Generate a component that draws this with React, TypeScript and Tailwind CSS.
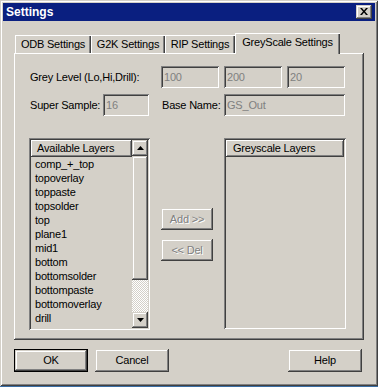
import React from 'react';

const raised = 'shadow-[inset_-1px_-1px_#404040,inset_1px_1px_#ffffff,inset_-2px_-2px_#808080]';
const raisedBtn = 'shadow-[inset_-1px_-1px_#404040,inset_1px_1px_#d4d0c8,inset_-2px_-2px_#808080,inset_2px_2px_#ffffff]';
const sunken = 'shadow-[inset_1px_1px_#808080,inset_-1px_-1px_#ffffff,inset_2px_2px_#404040,inset_-2px_-2px_#d4d0c8]';

const layers = [
  'comp_+_top',
  'topoverlay',
  'toppaste',
  'topsolder',
  'top',
  'plane1',
  'mid1',
  'bottom',
  'bottomsolder',
  'bottompaste',
  'bottomoverlay',
  'drill',
  'board',
];

const Field: React.FC<{ value: string; width: string }> = ({ value, width }) => (
  <div className={`${width} h-[22px] bg-[#d4d0c8] ${sunken} flex items-center pl-[3px] text-[#808080]`}>{value}</div>
);

const Arrow: React.FC<{ up?: boolean }> = ({ up }) => (
  <svg width="7" height="4" viewBox="0 0 7 4">
    {up ? <polygon points="3.5,0 7,4 0,4" fill="#000" /> : <polygon points="0,0 7,0 3.5,4" fill="#000" />}
  </svg>
);

const Tab: React.FC<{ label: string; width: string; active?: boolean }> = ({ label, width, active }) => (
  <div
    className={`${width} ${active ? 'h-[21px] -mb-[1px] relative z-10 pb-[3px]' : 'h-[18px]'} bg-[#d4d0c8] shadow-[inset_1px_1px_#ffffff,inset_-1px_0_#404040,inset_-2px_0_#808080] flex items-center justify-center`}
  >
    {label}
  </div>
);

export default function App() {
  return (
    <div className="w-[378px] h-[387px] bg-[#3a6ea5] font-['Liberation_Sans',Arial,sans-serif] text-[11px] tracking-[-0.2px] text-black leading-none">
      <div className="w-[378px] h-[386px] bg-[#d4d0c8] p-[3px] flex flex-col shadow-[inset_1px_1px_#d4d0c8,inset_-1px_-1px_#404040,inset_2px_2px_#ffffff,inset_-2px_-2px_#808080]">
        {/* title bar */}
        <div className="h-[18px] bg-[#0a1f80] flex items-center justify-between pl-[3px] pr-[3px]">
          <span className="text-white font-bold text-[12px] tracking-normal">Settings</span>
          <div className={`w-[16px] h-[14px] bg-[#d4d0c8] ${raisedBtn} flex items-center justify-center pb-[1px] pr-[1px]`}>
            <svg width="8" height="7" viewBox="0 0 8 7">
              <path d="M0 0h2l2 2.5L6 0h2L5 3.5 8 7H6L4 4.5 2 7H0l3-3.5z" fill="#000" />
            </svg>
          </div>
        </div>

        {/* tabs */}
        <div className="mt-[12px] ml-[12px] h-[20px] flex items-end">
          <Tab label="ODB Settings" width="w-[76px]" />
          <Tab label="G2K Settings" width="w-[74px]" />
          <Tab label="RIP Settings" width="w-[70px]" />
          <Tab label="GreyScale Settings" width="w-[105px]" active />
        </div>

        {/* tab panel */}
        <div className={`ml-[11px] w-[350px] h-[287px] bg-[#d4d0c8] ${raised} flex flex-col`}>
          <div className="mt-[13px] pl-[16px] flex items-center">
            <div className="w-[131px]">Grey Level (Lo,Hi,Drill):</div>
            <Field value="100" width="w-[58px]" />
            <div className="w-[5px]" />
            <Field value="200" width="w-[58px]" />
            <div className="w-[5px]" />
            <Field value="20" width="w-[58px]" />
          </div>
          <div className="mt-[6px] pl-[16px] flex items-center">
            <div className="w-[73px]">Super Sample:</div>
            <Field value="16" width="w-[46px]" />
            <div className="w-[13px]" />
            <div className="w-[62px]">Base Name:</div>
            <Field value="GS_Out" width="w-[121px]" />
          </div>

          <div className="mt-[22px] pl-[15px] flex items-start">
            {/* available layers */}
            <div className={`w-[121px] h-[192px] ${sunken} p-[2px] flex`}>
              <div className="w-[101px] h-[188px] flex flex-col overflow-hidden">
                <div className={`h-[17px] shrink-0 ${raised} flex items-center pl-[6px]`}>Available Layers</div>
                {layers.map(l => (
                  <div key={l} className="h-[14px] shrink-0 flex items-center pl-[4px]">{l}</div>
                ))}
              </div>
              <div className="w-[16px] h-[188px] flex flex-col">
                <div className={`h-[16px] shrink-0 ${raisedBtn} flex items-center justify-center`}><Arrow up /></div>
                <div className={`h-[124px] shrink-0 ${raisedBtn}`} />
                <div className="flex-1 bg-[repeating-conic-gradient(#ffffff_0_25%,#d4d0c8_0_50%)] bg-[length:2px_2px]" />
                <div className={`h-[16px] shrink-0 ${raisedBtn} flex items-center justify-center`}><Arrow /></div>
              </div>
            </div>

            {/* add / del */}
            <div className="ml-[11px] w-[52px] pt-[70px] flex flex-col gap-[9px]">
              <div className={`h-[22px] ${raisedBtn} flex items-center justify-center text-[#808080] [text-shadow:1px_1px_#ffffff]`}>Add &gt;&gt;</div>
              <div className={`h-[22px] ${raisedBtn} flex items-center justify-center text-[#808080] [text-shadow:1px_1px_#ffffff]`}>&lt;&lt; Del</div>
            </div>

            {/* greyscale layers */}
            <div className={`ml-[11px] w-[122px] h-[191px] ${sunken} p-[2px]`}>
              <div className={`h-[17px] ${raised} flex items-center pl-[7px]`}>Greyscale Layers</div>
            </div>
          </div>
        </div>

        {/* bottom buttons */}
        <div className="mt-[9px] flex items-center">
          <div className="ml-[11px] w-[74px] h-[23px] border border-black">
            <div className={`w-full h-full ${raisedBtn} flex items-center justify-center`}>OK</div>
          </div>
          <div className={`ml-[7px] w-[74px] h-[23px] ${raisedBtn} flex items-center justify-center`}>Cancel</div>
          <div className={`ml-auto mr-[13px] w-[74px] h-[23px] ${raisedBtn} flex items-center justify-center`}>Help</div>
        </div>
      </div>
    </div>
  );
}
